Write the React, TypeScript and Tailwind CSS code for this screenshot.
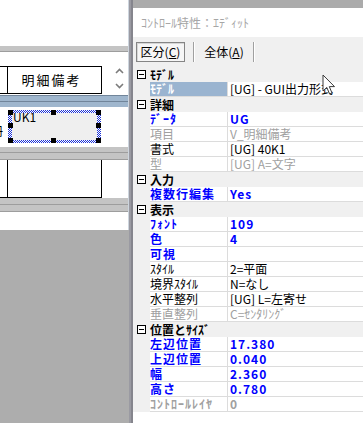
import React from 'react';

type Tone = 'normal' | 'blue' | 'gray' | 'grayBold';

type Row =
  | { kind: 'cat'; label: string }
  | { kind: 'prop'; name: string; value?: string; tone?: Tone; selected?: boolean };

const rows: Row[] = [
  { kind: 'cat', label: 'ﾓﾃﾞﾙ' },
  { kind: 'prop', name: 'ﾓﾃﾞﾙ', value: '[UG] - GUI出力形式', selected: true },
  { kind: 'cat', label: '詳細' },
  { kind: 'prop', name: 'ﾃﾞｰﾀ', value: 'UG', tone: 'blue' },
  { kind: 'prop', name: '項目', value: 'V_明細備考', tone: 'gray' },
  { kind: 'prop', name: '書式', value: '[UG] 40K1' },
  { kind: 'prop', name: '型', value: '[UG] A=文字', tone: 'gray' },
  { kind: 'cat', label: '入力' },
  { kind: 'prop', name: '複数行編集', value: 'Yes', tone: 'blue' },
  { kind: 'cat', label: '表示' },
  { kind: 'prop', name: 'ﾌｫﾝﾄ', value: '109', tone: 'blue' },
  { kind: 'prop', name: '色', value: '4', tone: 'blue' },
  { kind: 'prop', name: '可視', value: '', tone: 'blue' },
  { kind: 'prop', name: 'ｽﾀｲﾙ', value: '2=平面' },
  { kind: 'prop', name: '境界ｽﾀｲﾙ', value: 'N=なし' },
  { kind: 'prop', name: '水平整列', value: '[UG] L=左寄せ' },
  { kind: 'prop', name: '垂直整列', value: 'C=ｾﾝﾀﾘﾝｸﾞ', tone: 'gray' },
  { kind: 'cat', label: '位置とｻｲｽﾞ' },
  { kind: 'prop', name: '左辺位置', value: '17.380', tone: 'blue' },
  { kind: 'prop', name: '上辺位置', value: '0.040', tone: 'blue' },
  { kind: 'prop', name: '幅', value: '2.360', tone: 'blue' },
  { kind: 'prop', name: '高さ', value: '0.780', tone: 'blue' },
  { kind: 'prop', name: 'ｺﾝﾄﾛｰﾙﾚｲﾔ', value: '0', tone: 'grayBold' },
];

const toneClass: Record<Tone, string> = {
  normal: 'text-black',
  blue: 'font-bold text-[#0000ff] tracking-[1px]',
  gray: 'text-[#a0a0a0]',
  grayBold: 'font-bold text-[#a0a0a0] tracking-[1px]',
};

function Chevron({ up }: { up?: boolean }) {
  return (
    <svg width="9" height="6" viewBox="0 0 9 6" className="block">
      <path
        d={up ? 'M1 5 L4.5 1.5 L8 5' : 'M1 1 L4.5 4.5 L8 1'}
        fill="none"
        stroke="#7c7c7c"
        strokeWidth="1.6"
      />
    </svg>
  );
}

function Handle({ pos }: { pos: string }) {
  return <div className={`absolute h-[5px] w-[5px] bg-black ${pos}`} />;
}

function GrayBand({ h }: { h: string }) {
  return <div className={`${h} border-b border-[#9d9d9d] bg-[#c4c4c4]`} />;
}

function LeftPane() {
  return (
    <div className="flex h-[230px] w-[129px] shrink-0 flex-col overflow-hidden border-r border-[#cdd5de] bg-white">
      <div className="h-[46px]" />
      <GrayBand h="h-[6px]" />
      <div className="flex h-[42px] items-end">
        <div className="flex h-[28px] w-[102px] border-y border-black">
          <div className="w-[8px] border-r border-black" />
          <div className="flex w-[94px] items-center justify-center border-r border-black pr-[6px] text-[13px] tracking-[2px] text-black">
            明細備考
          </div>
        </div>
        <div className="ml-[13px] flex h-[28px] flex-col pt-[2px]">
          <Chevron up />
          <div className="h-[9px]" />
          <Chevron />
        </div>
      </div>
      <div className="mt-[1px] border-t border-[#71859a] bg-[#9fb6cd]">
        <div className="h-[5px]" />
        <div className="h-[6px] border-t border-[#71859a]" />
      </div>
      <div className="relative h-[40px]">
        <span className="absolute left-[-9px] top-[18px] text-[12px] leading-none text-black">冊</span>
        <div className="relative ml-[8px] mt-[3px] h-[33px] w-[93px] bg-[repeating-conic-gradient(#1d33d8_0_25%,#ffffff_0_50%)] bg-[length:2px_2px] px-[4px] py-[3px]">
          <div className="h-full bg-[#efefef]" />
          <span className="absolute left-[5px] top-[1px] text-[12px] leading-none text-black">UK1</span>
          <Handle pos="left-0 top-0" />
          <Handle pos="left-[43px] top-0" />
          <Handle pos="right-0 top-0" />
          <Handle pos="left-0 top-[13px]" />
          <Handle pos="right-0 top-[13px]" />
          <Handle pos="left-0 bottom-0" />
          <Handle pos="left-[43px] bottom-0" />
          <Handle pos="right-0 bottom-0" />
        </div>
      </div>
      <GrayBand h="h-[6px]" />
      <GrayBand h="h-[7px]" />
      <div className="flex h-[38px] w-[102px] border-b border-black">
        <div className="w-[8px] border-r border-black" />
        <div className="w-[94px] border-r border-black" />
      </div>
      <GrayBand h="h-[7px]" />
      <GrayBand h="h-[7px]" />
      <div className="flex-1" />
    </div>
  );
}

function Sep() {
  return <div className="h-[20px] w-[2px] border-l border-[#a0a0a0] bg-white" />;
}

function Toolbar() {
  return (
    <div className="flex h-[30px] items-start bg-[#f0f0f0] pl-[3px] pt-[5px] text-[12px] text-black">
      <div className="flex h-[20px] w-[49px] items-center justify-center border border-[#858585] bg-[#f6f6f6] shadow-[inset_1px_1px_0_#d6d6d6]">
        区分(<span className="underline">C</span>)
      </div>
      <div className="w-[8px]" />
      <Sep />
      <div className="flex h-[20px] w-[58px] items-center justify-center">
        全体(<span className="underline">A</span>)
      </div>
      <Sep />
    </div>
  );
}

function CatRow({ label }: { label: string }) {
  return (
    <div className="flex h-[15px] items-center bg-[#f0f0f0]">
      <div className="ml-[4px] flex h-[9px] w-[9px] items-center justify-center border border-black bg-white">
        <div className="h-[1px] w-[5px] bg-black" />
      </div>
      <span className="ml-[4px] text-[12px] font-bold leading-[15px] text-black">{label}</span>
    </div>
  );
}

function PropRow({ row }: { row: Extract<Row, { kind: 'prop' }> }) {
  const tone = toneClass[row.tone ?? 'normal'];
  return (
    <div className="flex h-[15px] text-[12px] leading-[14px]">
      <div className="w-[17px] shrink-0 bg-[#f0f0f0]" />
      <div
        className={`w-[78px] shrink-0 whitespace-nowrap border-b border-r border-[#dcdcdc] ${
          row.selected ? 'bg-[#9ab4d0] font-bold text-white' : `bg-white ${tone}`
        }`}
      >
        {row.name}
      </div>
      <div
        className={`flex-1 whitespace-nowrap border-b border-[#dcdcdc] bg-white pl-[2px] ${
          row.selected ? 'text-black' : tone
        }`}
      >
        {row.value}
      </div>
    </div>
  );
}

function PropertyWindow() {
  return (
    <div className="flex min-w-0 flex-1 flex-col border-l-2 border-[#85858d] bg-white">
      <div className="h-[8px] bg-[#ababab]" />
      <div className="flex h-[29px] items-center pl-[8px] text-[12px] text-[#a6a6a6]">
        ｺﾝﾄﾛｰﾙ特性：ｴﾃﾞｨｯﾄ
      </div>
      <Toolbar />
      <div className="flex flex-col">
        {rows.map((row, i) =>
          row.kind === 'cat' ? <CatRow key={i} label={row.label} /> : <PropRow key={i} row={row} />
        )}
      </div>
      <div className="flex-1 bg-white" />
    </div>
  );
}

function Cursor() {
  return (
    <svg
      width="14"
      height="22"
      viewBox="0 0 14 22"
      className="absolute left-[322px] top-[74px]"
    >
      <path
        d="M1 1 L1 17 L4.8 13.4 L7.6 20 L10 19 L7.3 12.6 L12.5 12.6 Z"
        fill="#ffffff"
        stroke="#3a3a3a"
        strokeWidth="1"
        strokeLinejoin="round"
      />
    </svg>
  );
}

export default function App() {
  return (
    <div className="relative flex h-[423px] w-[363px] overflow-hidden bg-[#adadad] font-['Noto_Sans_CJK_JP','Noto_Sans',sans-serif]">
      <LeftPane />
      <div className="w-[2px] shrink-0 bg-[#9a9aa2]" />
      <PropertyWindow />
      <Cursor />
    </div>
  );
}
